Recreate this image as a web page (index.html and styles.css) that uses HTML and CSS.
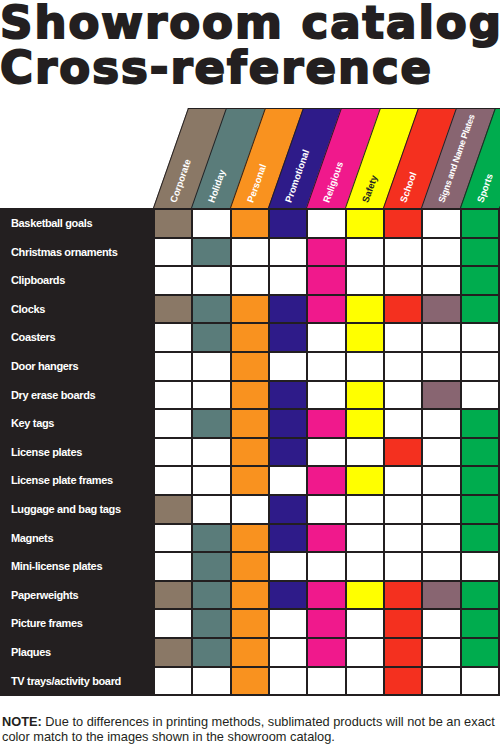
FILE: index.html
```html
<!DOCTYPE html>
<html>
<head>
<meta charset="UTF-8">
<title>Showroom catalog Cross-reference</title>
<link rel="stylesheet" href="styles.css">
</head>
<body>
<div class="page">
	<h1 class="title">Showroom catalog<br>Cross-reference</h1>

	<div class="heads">
		<div></div>
		<div class="head cor"><span>Corporate</span></div>
		<div class="head hol"><span>Holiday</span></div>
		<div class="head per"><span>Personal</span></div>
		<div class="head pro"><span>Promotional</span></div>
		<div class="head rel"><span>Religious</span></div>
		<div class="head saf"><span>Safety</span></div>
		<div class="head sch"><span>School</span></div>
		<div class="head sig"><span class="long">Signs and Name Plates</span></div>
		<div class="head spo"><span>Sports</span></div>
	</div>

	<div class="chart">
		<div class="row"><div class="name">Basketball goals</div><div class="cor"></div><div></div><div class="per"></div><div class="pro"></div><div></div><div class="saf"></div><div class="sch"></div><div></div><div class="spo"></div></div>
		<div class="row"><div class="name">Christmas ornaments</div><div></div><div class="hol"></div><div></div><div></div><div class="rel"></div><div></div><div></div><div></div><div class="spo"></div></div>
		<div class="row"><div class="name">Clipboards</div><div></div><div></div><div></div><div></div><div class="rel"></div><div></div><div></div><div></div><div class="spo"></div></div>
		<div class="row"><div class="name">Clocks</div><div class="cor"></div><div class="hol"></div><div class="per"></div><div class="pro"></div><div class="rel"></div><div class="saf"></div><div class="sch"></div><div class="sig"></div><div class="spo"></div></div>
		<div class="row"><div class="name">Coasters</div><div></div><div class="hol"></div><div class="per"></div><div class="pro"></div><div></div><div class="saf"></div><div></div><div></div><div></div></div>
		<div class="row"><div class="name">Door hangers</div><div></div><div></div><div class="per"></div><div></div><div></div><div></div><div></div><div></div><div></div></div>
		<div class="row"><div class="name">Dry erase boards</div><div></div><div></div><div class="per"></div><div class="pro"></div><div></div><div class="saf"></div><div></div><div class="sig"></div><div></div></div>
		<div class="row"><div class="name">Key tags</div><div></div><div class="hol"></div><div class="per"></div><div class="pro"></div><div class="rel"></div><div class="saf"></div><div></div><div></div><div class="spo"></div></div>
		<div class="row"><div class="name">License plates</div><div></div><div></div><div class="per"></div><div class="pro"></div><div></div><div></div><div class="sch"></div><div></div><div class="spo"></div></div>
		<div class="row"><div class="name">License plate frames</div><div></div><div></div><div class="per"></div><div></div><div class="rel"></div><div class="saf"></div><div></div><div></div><div class="spo"></div></div>
		<div class="row"><div class="name">Luggage and bag tags</div><div class="cor"></div><div></div><div></div><div class="pro"></div><div></div><div></div><div></div><div></div><div class="spo"></div></div>
		<div class="row"><div class="name">Magnets</div><div></div><div class="hol"></div><div class="per"></div><div class="pro"></div><div class="rel"></div><div></div><div></div><div></div><div class="spo"></div></div>
		<div class="row"><div class="name">Mini-license plates</div><div></div><div class="hol"></div><div class="per"></div><div></div><div></div><div></div><div></div><div></div><div></div></div>
		<div class="row"><div class="name">Paperweights</div><div class="cor"></div><div class="hol"></div><div class="per"></div><div class="pro"></div><div class="rel"></div><div class="saf"></div><div class="sch"></div><div class="sig"></div><div class="spo"></div></div>
		<div class="row"><div class="name">Picture frames</div><div></div><div class="hol"></div><div class="per"></div><div></div><div class="rel"></div><div></div><div class="sch"></div><div></div><div class="spo"></div></div>
		<div class="row"><div class="name">Plaques</div><div class="cor"></div><div class="hol"></div><div class="per"></div><div></div><div class="rel"></div><div></div><div class="sch"></div><div></div><div class="spo"></div></div>
		<div class="row"><div class="name">TV trays/activity board</div><div></div><div></div><div class="per"></div><div></div><div></div><div></div><div class="sch"></div><div></div><div></div></div>
	</div>

	<p class="note"><b>NOTE:</b> Due to differences in printing methods, sublimated products will not be an exact color match to the images shown in the showroom catalog.</p>
</div>
</body>
</html>
```

FILE: styles.css
```css
body{
	margin:0;
	padding:0;
	background:#fff;
	color:#231f20;
	font-family:"Liberation Sans", Arial, sans-serif;
}
.page{
	width:500px;
	height:747px;
	overflow:hidden;
}
.title{
	margin:0;
	font-family:"DejaVu Sans", sans-serif;
	font-weight:bold;
	font-size:45px;
	line-height:45px;
	letter-spacing:2px;
	white-space:nowrap;
	color:#231f20;
	-webkit-text-stroke:2px #231f20;
}

/* colours, shared by heads and cells */
.cor{ --c:#8a7866; }
.hol{ --c:#5a7c7a; }
.per{ --c:#f9921f; }
.pro{ --c:#2e1b89; }
.rel{ --c:#f0198c; }
.saf{ --c:#ffff00; }
.sch{ --c:#f4301f; }
.sig{ --c:#886571; }
.spo{ --c:#00ac4e; }

/* slanted column heads */
.heads{
	display:grid;
	grid-template-columns:153px repeat(9, 1fr);
	column-gap:2px;
	padding-right:2px;
	height:100px;
	margin-top:18px;
}
.head{
	position:relative;
}
.head:before{
	content:"";
	position:absolute;
	left:-2px;
	right:-2px;
	top:0;
	bottom:0;
	border:1px solid #231f20;
	border-bottom:none;
	transform-origin:0 100%;
	transform:skewX(-19.3deg);
	background:var(--c);
}
.head span{
	position:absolute;
	left:23px;
	bottom:4px;
	font-size:9.5px;
	line-height:10px;
	font-weight:bold;
	color:#fff;
	white-space:nowrap;
	transform-origin:0 100%;
	transform:rotate(-70.7deg);
}
.head span.long{
	font-size:9px;
	letter-spacing:-0.3px;
}
.head.saf span{
	color:#231f20;
}

/* grid */
.chart{
	display:flex;
	flex-direction:column;
	gap:2px;
	padding:2px 2px 2px 0;
	background:#231f20;
}
.row{
	display:grid;
	grid-template-columns:153px repeat(9, 1fr);
	column-gap:2px;
	height:26.6px;
}
.row div{
	background:var(--c, #fff);
}
.row .name{
	background:#231f20;
	color:#fff;
	font-size:11px;
	font-weight:bold;
	letter-spacing:-0.35px;
	line-height:26.6px;
	padding-left:11px;
	white-space:nowrap;
}

.note{
	margin:19px 0 0 2px;
	font-size:12.8px;
	line-height:14.5px;
	color:#231f20;
}
.note b{
	font-weight:bold;
}
```
